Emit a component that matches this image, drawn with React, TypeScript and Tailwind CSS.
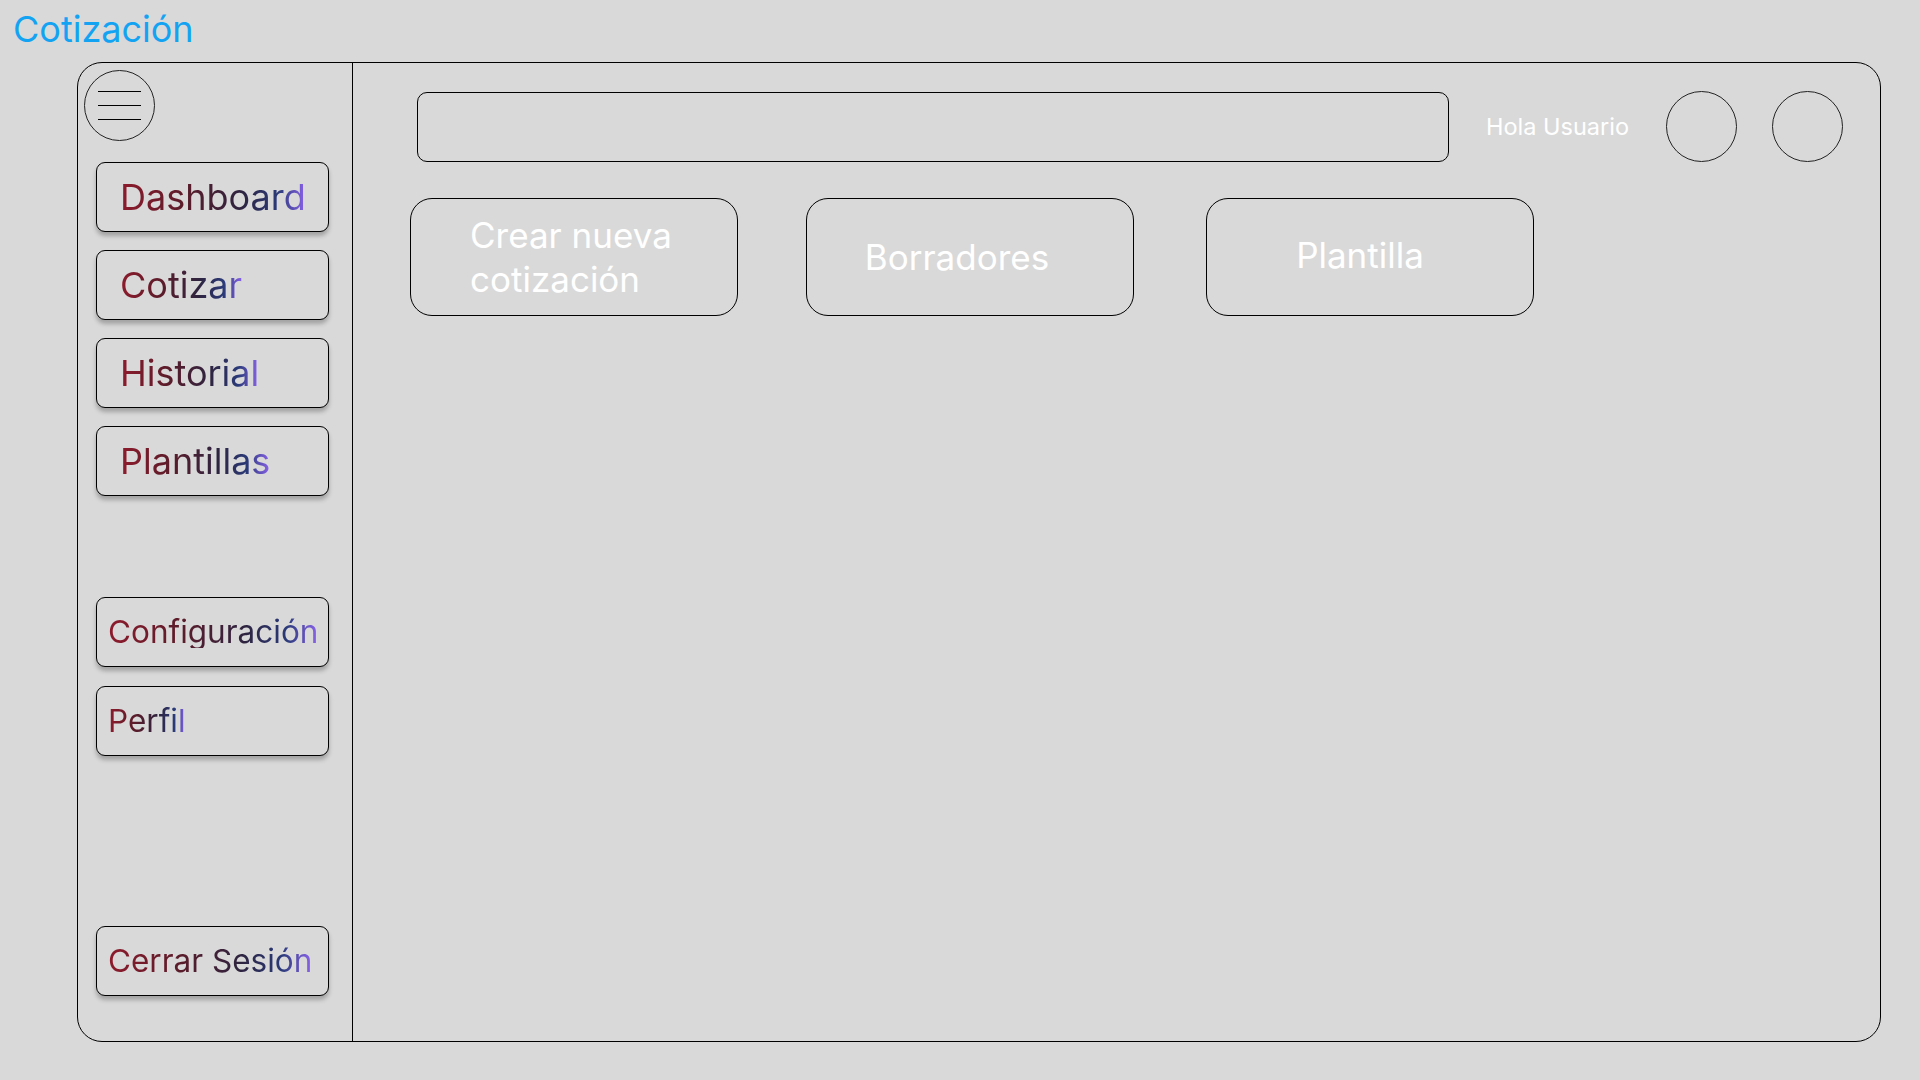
// Cotización — wireframe dashboard: sidebar nav, search header and quick-action cards.

const NAV_TOP = ['Dashboard', 'Cotizar', 'Historial', 'Plantillas']

const gradientText =
  'bg-[linear-gradient(90deg,#8e1b2c_0%,#5a1c2a_35%,#2e2440_65%,#2a3a78_85%,#8a63ec_100%)] bg-clip-text text-transparent'

function NavButton({ label, big }: { label: string; big?: boolean }) {
  return (
    <button
      className={`w-[233px] h-[70px] shrink-0 rounded-[9px] border border-black bg-[#d9d9d9] shadow-[0_4px_4px_rgba(0,0,0,0.25)] flex items-center text-left ${big ? 'pl-[23px] text-[36px]' : 'pl-[11px] text-[31.5px]'}`}
    >
      <span className={`inline-block leading-none pb-[1px] ${gradientText}`}>{label}</span>
    </button>
  )
}

export default function App() {
  return (
    <div className="w-[1920px] h-[1080px] bg-[#d9d9d9] font-['Inter','Liberation_Sans',sans-serif] overflow-hidden">
      <h1 className="pl-[13px] pt-[11px] text-[36px] leading-[36px] text-[#13a3f3] font-normal">Cotización</h1>

      <div className="ml-[77px] mt-[15px] w-[1804px] h-[980px] border border-black rounded-[25px] flex">
        {/* Sidebar */}
        <aside className="w-[275px] h-full border-r border-black flex flex-col">
          <div className="ml-[6px] mt-[7px] w-[71px] h-[71px] rounded-full border border-[#222] flex flex-col items-center justify-center gap-[13px]">
            <span className="block w-[43px] h-px bg-black" />
            <span className="block w-[43px] h-px bg-black" />
            <span className="block w-[43px] h-px bg-black" />
          </div>

          <div className="ml-[18px] mt-[21px] flex flex-col gap-[18px]">
            {NAV_TOP.map((l) => (
              <NavButton key={l} label={l} big />
            ))}
          </div>

          <div className="ml-[18px] mt-[101px] flex flex-col gap-[19px]">
            <NavButton label="Configuración" />
            <NavButton label="Perfil" />
          </div>

          <div className="ml-[18px] mt-[170px]">
            <NavButton label="Cerrar Sesión" />
          </div>
        </aside>

        {/* Main */}
        <main className="flex-1 flex flex-col">
          <div className="mt-[28px] ml-[64px] flex items-center">
            <div className="w-[1032px] h-[70px] rounded-[10px] border border-black" />
            <span className="ml-[37px] text-[23.5px] text-white leading-none">Hola Usuario</span>
            <div className="ml-[37px] w-[71px] h-[71px] rounded-full border border-[#222]" />
            <div className="ml-[35px] w-[71px] h-[71px] rounded-full border border-[#222]" />
          </div>

          <div className="mt-[36px] ml-[57px] flex">
            <div className="w-[328px] h-[118px] rounded-[22px] border border-black flex items-center pl-[59px]">
              <span className="text-[35px] leading-[44px] text-white">
                Crear nueva
                <br />
                cotización
              </span>
            </div>
            <div className="ml-[68px] w-[328px] h-[118px] rounded-[22px] border border-black flex items-center justify-center pr-[26px]">
              <span className="text-[35px] leading-none text-white">Borradores</span>
            </div>
            <div className="ml-[72px] w-[328px] h-[118px] rounded-[22px] border border-black flex items-center justify-center pr-[20px] pb-[4px]">
              <span className="text-[35px] leading-none text-white">Plantilla</span>
            </div>
          </div>
        </main>
      </div>
    </div>
  )
}
